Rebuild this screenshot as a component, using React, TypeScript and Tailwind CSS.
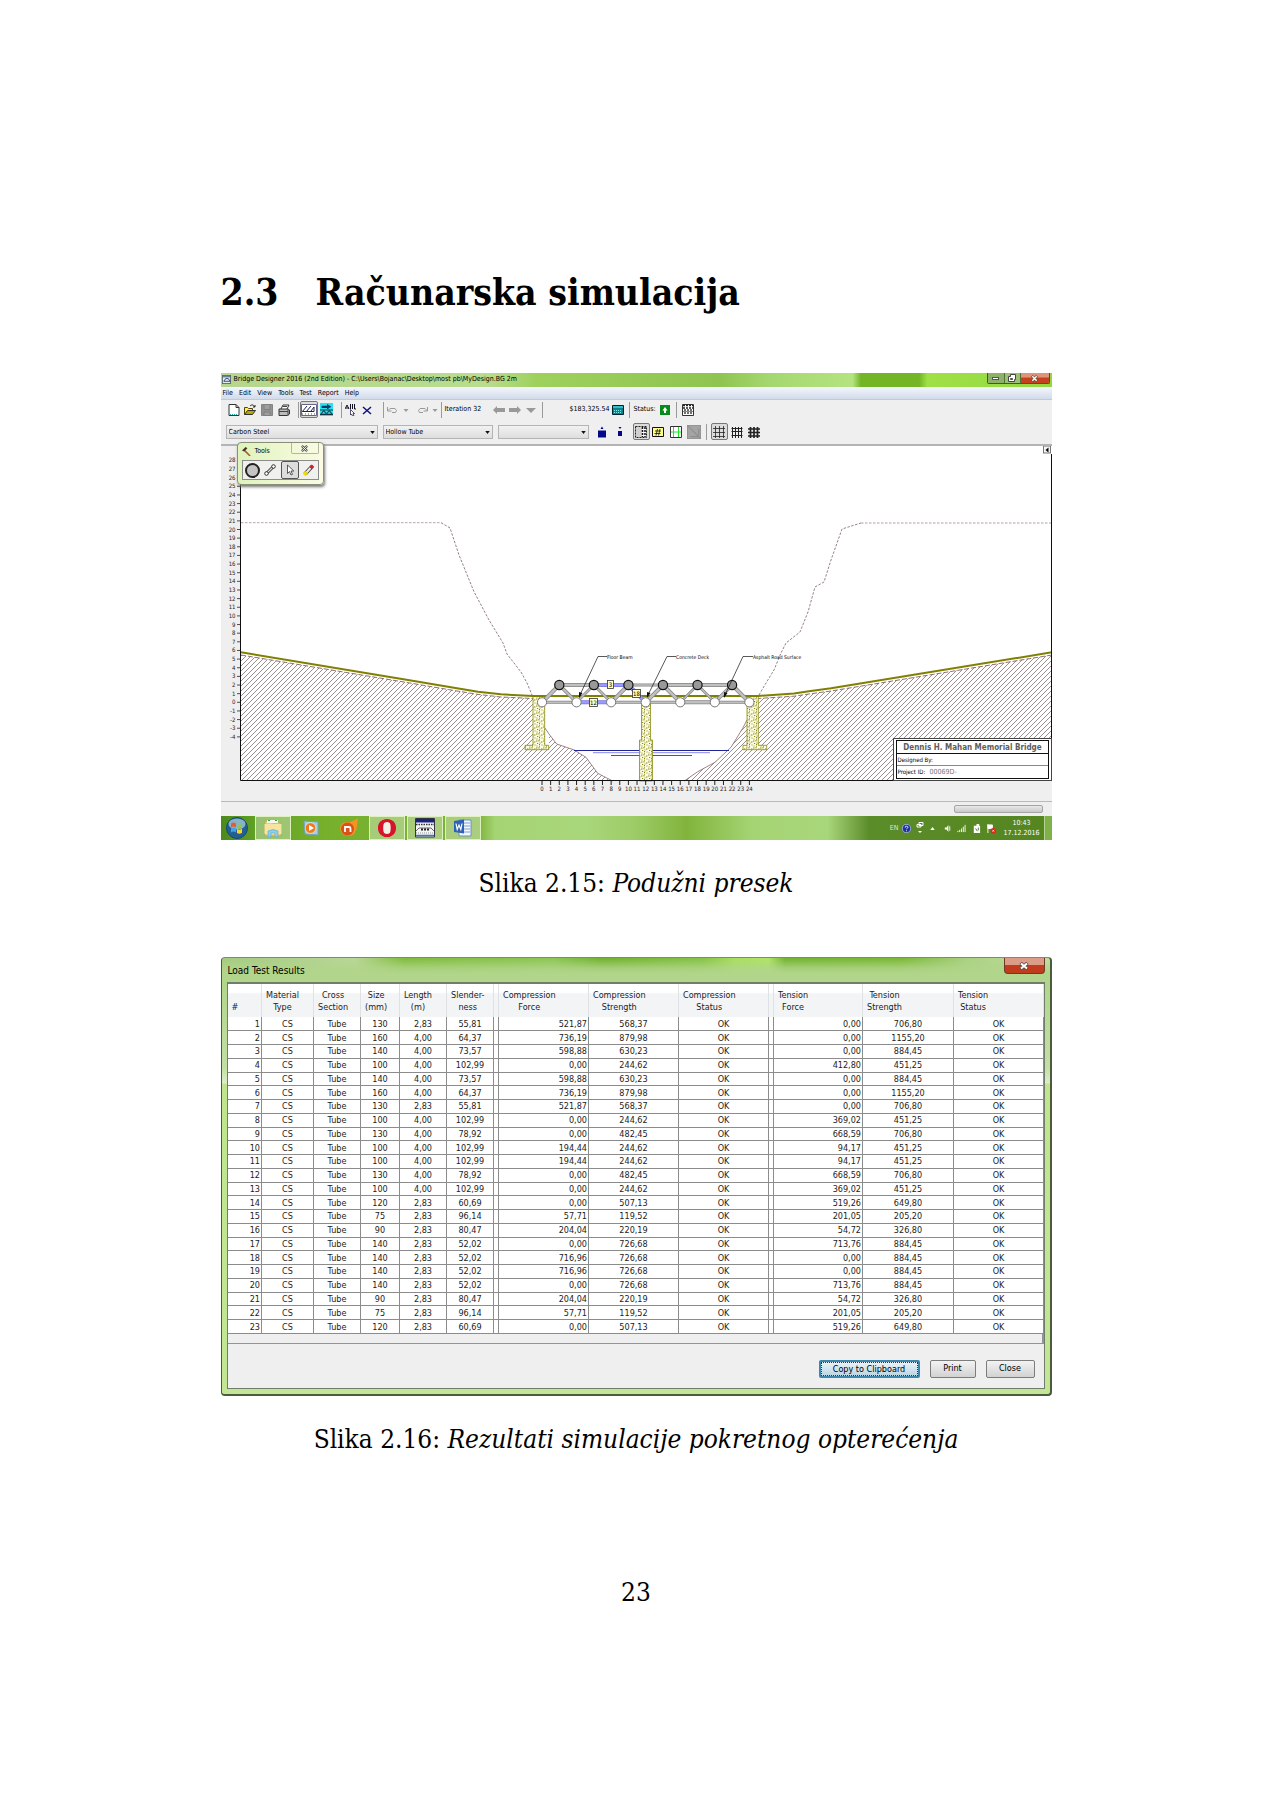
import React from "react";

const ui = "font-['DejaVu_Sans_Condensed','DejaVu_Sans',sans-serif]";
const serif = "font-['DejaVu_Serif_Condensed','DejaVu_Serif',serif]";

type Kids = { children?: React.ReactNode };

function Glyph({ children, wide = false }: Kids & { wide?: boolean }) {
  return (
    <svg viewBox={wide ? "0 0 16 12" : "0 0 12 12"} className={wide ? "h-3 w-4" : "size-3"} aria-hidden="true">
      {children}
    </svg>
  );
}

function Tool({ label, on = false, className, children }: Kids & { label: string; on?: boolean; className: string }) {
  return (
    <button
      type="button"
      aria-label={label}
      className={`flex h-[17px] shrink-0 items-center justify-center ${on ? "rounded-xs border border-[#777] bg-[#dcdcdc]" : ""} ${className}`}
    >
      {children}
    </button>
  );
}

function Sep({ className }: { className: string }) {
  return <span className={`h-4 w-px shrink-0 bg-[#9a9a9a] ${className}`} />;
}

function Caret() {
  return (
    <Glyph>
      <path d="M3.500 5h5L6 8z" fill="#999" />
    </Glyph>
  );
}

function Combo({ label, value, className }: { label: string; value: string; className: string }) {
  return (
    <span className={`relative flex ${className}`}>
      <select
        aria-label={label}
        className="h-[14px] w-full appearance-none border border-[#b4b4b4] bg-linear-to-b from-[#f2f2f2] to-[#dedede] pl-[2px] text-[7px] leading-3"
      >
        <option>{value}</option>
      </select>
      <svg viewBox="0 0 6 4" className="pointer-events-none absolute right-[3px] top-[6px] h-[3px] w-[5px]" aria-hidden="true">
        <path d="M0 0h6L3 4z" fill="#111" />
      </svg>
    </span>
  );
}

function TitleBar() {
  return (
    <div className="flex h-[14px] items-start bg-[linear-gradient(90deg,#b5d68c_0%,#b9dc8e_32%,#9ed05c_38%,#8fc450_60%,#a5d770_66%,#b4e37f_76%,#74b526_77%,#74b526_84%,#a0e046_85%,#93d843_100%)]">
      <svg viewBox="0 0 10 10" className="ml-px mt-[2px] size-[9px]" aria-hidden="true">
        <rect x="0.500" y="0.500" width="9" height="9" fill="#e8edf2" stroke="#567" />
        <path d="M1 2h8M2 7l2-3h3l2 3z" stroke="#246" fill="none" />
      </svg>
      <span className="ml-[3px] mt-[2px] whitespace-nowrap text-[7px] leading-[9px]">
        Bridge Designer 2016 (2nd Edition) - C:\Users\Bojanac\Desktop\most pb\MyDesign.BG 2m
      </span>
      <span className="ml-auto mr-[2px] flex h-[11px] overflow-hidden rounded-b-xs border border-t-0 border-[#3f5a28]">
        <button type="button" aria-label="Minimize" className="flex w-[17px] items-end justify-center border-r border-[#4f6f35] bg-[#8db168] pb-[3px]">
          <span className="h-[3px] w-[7px] border border-[#555] bg-white" />
        </button>
        <button type="button" aria-label="Restore" className="flex w-[16px] items-center justify-center border-r border-[#4f6f35] bg-[#9cbf77]">
          <svg viewBox="0 0 8 8" className="size-2" aria-hidden="true">
            <path d="M2.500.5h5v5h-1v2h-6v-5h2z" fill="#fff" stroke="#444" />
            <path d="M2.500 4.500h2v1h-2z" fill="#555" stroke="#555" />
          </svg>
        </button>
        <button type="button" aria-label="Close" className="flex w-[28px] items-center justify-center bg-linear-to-b from-[#e0927a] from-40% to-[#c5401c] to-50%">
          <svg viewBox="0 0 8 8" className="size-[7px]" aria-hidden="true">
            <path d="M1 1l6 6M7 1L1 7" stroke="#555" strokeWidth="3" />
            <path d="M1.500 1.500l5 5M6.500 1.500l-5 5" stroke="#fff" strokeWidth="1.600" />
          </svg>
        </button>
      </span>
    </div>
  );
}

function MainToolbar() {
  return (
    <div className="flex h-[19px] items-center pl-[5px]">
      <Tool label="New" className="w-4">
        <Glyph>
          <path d="M1 .5h7l3 3v8H1z" fill="#fff" stroke="#333" />
          <path d="M8 .5v3h3" fill="none" stroke="#333" />
          <path d="M2 10.500h8" stroke="#2aa" strokeDasharray="1 1" />
        </Glyph>
      </Tool>
      <Tool label="Open" className="w-4">
        <Glyph>
          <path d="M0.500 10.500v-7h3l1 1h4v2" fill="#ffee50" stroke="#554400" />
          <path d="M0.500 10.500l3-4h8l-3 4z" fill="#b5a800" stroke="#333" />
          <path d="M6 2c2-2 4-1 4.500 1M9 3h2V1" fill="none" stroke="#222" />
        </Glyph>
      </Tool>
      <Tool label="Save" className="w-[18px]">
        <Glyph>
          <path d="M0.500.5h11v11H.5z" fill="#929292" stroke="#848484" />
          <path d="M3 .5h6v5H3zM3 8h6v3.500H3z" fill="#9e9e9e" stroke="#808080" />
        </Glyph>
      </Tool>
      <Tool label="Print" className="w-[17px]">
        <Glyph>
          <path d="M3 5l2-4h6L9 5" fill="#fff" stroke="#333" />
          <path d="M1 5h9l1.500 1v4l-2 1.500H1z" fill="#bbb" stroke="#333" />
          <path d="M1 7.500h9M10 5.500v6M5 2.500h4" stroke="#444" />
        </Glyph>
      </Tool>
      <Sep className="mr-px ml-[5px]" />
      <Tool label="Drawing board" on className="w-[18px]">
        <Glyph wide>
          <path d="M.5.5h15v11H.5z" fill="#fff" stroke="#668" />
          <path d="M1 8l5-6M5 8l5-6M2 7.500h11V3l-3 4" fill="none" stroke="#225" />
          <path d="M1 10h14" stroke="#556" strokeDasharray="1 2" />
        </Glyph>
      </Tool>
      <Tool label="Load test" className="w-[18px]">
        <svg viewBox="0 0 12 12" className="size-[13px]" aria-hidden="true">
          <path d="M0 0h12v12H0z" fill="#2de0ec" />
          <path d="M1.500 2.500h5V1l4 2.500-4 2.500V4.500h-5z" fill="#003a70" />
          <path d="M0 6.500h12M0 10.500h12" stroke="#134" />
          <path d="M1 10l2.500-3L6 10l2.500-3 2.500 3" fill="none" stroke="#245" />
        </svg>
      </Tool>
      <Sep className="mr-px ml-[5px]" />
      <Tool label="Select all" className="w-[17px]">
        <Glyph>
          <path d="M0 5l2-4 2 4M1 4h3M5.500 0v5M7.500 0v5M9.500 0v5H11" stroke="#112" fill="none" />
          <path d="M5.500 5.500l4 4H8l1 2-1.500.5-1-2-1 1z" fill="#fff" stroke="#113" strokeWidth="0.700" />
        </Glyph>
      </Tool>
      <Tool label="Delete" className="w-[14px]">
        <Glyph>
          <path d="M2 3l8 7M10 3L2 10" stroke="#11117e" strokeWidth="1.500" />
        </Glyph>
      </Tool>
      <Sep className="ml-[9px] mr-[2px]" />
      <Tool label="Undo" className="w-3">
        <Glyph>
          <path d="M1.500 3v4h4M2 6.500l2-2h5l1.500 2-1 2H6" fill="none" stroke="#999" />
        </Glyph>
      </Tool>
      <Tool label="Undo list" className="ml-[2px] w-3">
        <Caret />
      </Tool>
      <Tool label="Redo" className="ml-[5px] w-3">
        <Glyph>
          <path d="M10.500 3v4h-4M10 6.500l-2-2H3l-1.500 2 1 2H6" fill="none" stroke="#999" />
        </Glyph>
      </Tool>
      <Tool label="Redo list" className="w-3">
        <Caret />
      </Tool>
      <Sep className="mr-[3px]" />
      <span className="w-[46px] whitespace-nowrap text-[7px]">Iteration 32</span>
      <Tool label="Back" className="w-4">
        <Glyph>
          <path d="M0 6l4-4v2h8v4H4v2z" fill="#999" />
        </Glyph>
      </Tool>
      <Tool label="Forward" className="w-4">
        <Glyph>
          <path d="M12 6L8 2v2H0v4h8v2z" fill="#999" />
        </Glyph>
      </Tool>
      <Tool label="Iterations" className="w-4">
        <Glyph>
          <path d="M1 4h10L6 9z" fill="#999" />
        </Glyph>
      </Tool>
      <Sep className="mr-[27px] ml-[3px]" />
      <span className="w-[40px] whitespace-nowrap text-[7px]">$183,325.54</span>
      <Tool label="Cost report" className="w-4">
        <Glyph>
          <path d="M.5 1.500h11v9H.5z" fill="#157f8c" stroke="#023" />
          <path d="M1 3h10" stroke="#5ff" />
          <path d="M2 8.500h8M2 6.500h8" stroke="#7ee" strokeDasharray="1 1" />
        </Glyph>
      </Tool>
      <Sep className="ml-[3px] mr-[4px]" />
      <span className="w-[24px] whitespace-nowrap text-[7px]">Status:</span>
      <Tool label="Bridge status" className="w-[14px]">
        <Glyph>
          <path d="M1 1h10v10H1z" fill="#078a1c" />
          <path d="M6 3L3.500 6.500H5V9h2V6.500h1.500z" fill="#fff" />
        </Glyph>
      </Tool>
      <Sep className="mx-[4px]" />
      <Tool label="Load test report" className="w-[14px]">
        <Glyph>
          <path d="M.5.500h11v11H.5z" fill="#fff" stroke="#333" />
          <path d="M1 1.500h10M1 4h10" stroke="#222" strokeWidth="1.400" strokeDasharray="2 1" />
          <path d="M3 5v6M6 5v6M9 5v6" stroke="#222" strokeWidth="1.300" strokeDasharray="2 1" />
          <path d="M1 7.500h10" stroke="#888" />
        </Glyph>
      </Tool>
    </div>
  );
}

function GridGlyph({ d, w }: { d: string; w: number }) {
  return (
    <Glyph>
      <path d={d} stroke="#222" strokeWidth={w} fill="none" />
    </Glyph>
  );
}

function MemberToolbar() {
  return (
    <div className="flex h-[27px] items-center border-b-2 border-[#b4b4b4] pl-[5px]">
      <Combo label="Material" value="Carbon Steel" className="w-[152px]" />
      <Combo label="Cross section" value="Hollow Tube" className="ml-[5px] w-[110px]" />
      <Combo label="Size" value="" className="ml-[5px] w-[91px]" />
      <Tool label="Increase size" className="ml-[5px] w-[17px]">
        <Glyph>
          <path d="M2 4.500h8v7H2zM4.500 3h3L6 .5z" fill="#06068a" />
        </Glyph>
      </Tool>
      <Tool label="Decrease size" className="w-[18px]">
        <Glyph>
          <path d="M4 5h4v5H4zM4.500 1h3L6 3z" fill="#06068a" />
        </Glyph>
      </Tool>
      <Tool label="Member table" on className="ml-[4px] w-[17px]">
        <Glyph>
          <path d="M.5.500h11v11H.5z" fill="#d0d0d0" stroke="#222" strokeDasharray="2 1" />
          <path d="M7 1h4v10H7z" fill="#fff" />
          <path d="M7.500 1v10M10 1v10" stroke="#111" strokeDasharray="2 1" strokeWidth="1.500" />
        </Glyph>
      </Tool>
      <Tool label="Member numbers" className="w-[17px]">
        <Glyph>
          <path d="M.5 1.500h11v9H.5z" fill="#ffff88" stroke="#111" />
          <path d="M3 5h6M2.500 7.500h6M5.500 3L4 9.500M8 3L6.500 9.500" stroke="#111" strokeWidth="0.800" />
        </Glyph>
      </Tool>
      <Tool label="Guides" className="w-[19px]">
        <Glyph>
          <path d="M.5.500h11v11H.5z" fill="#fff" stroke="#333" />
          <path d="M3.500 1v10M8.500 1v10M1 6h10" stroke="#1de52d" />
        </Glyph>
      </Tool>
      <Tool label="Template" className="w-[16px]">
        <svg viewBox="0 0 12 12" className="size-[14px]" aria-hidden="true">
          <path d="M0 0h12v12H0z" fill="#a4a4a4" stroke="#888" />
          <path d="M1 1l10 10M3 10h7V3" stroke="#8e8e8e" fill="none" />
        </svg>
      </Tool>
      <Sep className="mr-[4px] ml-[4px]" />
      <Tool label="Coarse grid" on className="w-[17px]">
        <GridGlyph w={0.8} d="M2.500 0v12M6.500 0v12M10.500 0v12M0 2.500h12M0 6.500h12M0 10.500h12" />
      </Tool>
      <Tool label="Medium grid" className="w-[18px]">
        <GridGlyph w={1} d="M1.500 1v11M4.500 1v11M7.500 1v11M10.500 1v11M.5 2.500h11M.5 5.500h11M.5 9.500h11" />
      </Tool>
      <Tool label="Fine grid" className="w-[17px]">
        <GridGlyph w={1.7} d="M2.500 1v11M6 1v11M9.500 1v11M0 3h12M0 6.500h12M0 10h12" />
      </Tool>
    </div>
  );
}

function ToolsPalette() {
  return (
    <div className="absolute left-[16px] top-[69px] w-[87px] rounded-sm border border-[#8a8f78] bg-linear-to-r from-[#dff3bb] to-[#fbfbe4] px-[4px] pb-[4px] shadow-[1px_2px_3px_#777]">
      <div className="flex h-[17px] items-start">
        <svg viewBox="0 0 10 10" className="mt-[4px] size-[9px]" aria-hidden="true">
          <path d="M3 4l6 6" stroke="#a5622d" strokeWidth="1.800" />
          <path d="M0 4l4-4 2 1.500L2.500 5z" fill="#443322" />
        </svg>
        <span className="ml-[4px] mt-[4px] text-[7px] leading-[9px]">Tools</span>
        <button type="button" aria-label="Close tools" className="ml-auto flex h-[11px] w-[28px] items-center justify-center rounded-b-xs border border-t-0 border-[#b3b69c]">
          <svg viewBox="0 0 8 8" className="size-[7px]" aria-hidden="true">
            <path d="M1 1l6 6M7 1L1 7" stroke="#555" strokeWidth="2.600" />
            <path d="M1.500 1.500l5 5M6.500 1.500l-5 5" stroke="#fff" />
          </svg>
        </button>
      </div>
      <div className="flex h-[20px] items-center justify-around border border-[#8b8b8b] bg-[#f0f0ee]">
        <button type="button" aria-label="Joint" className="size-[15px] rounded-full border-2 border-[#222] bg-[#c4c4c4]" />
        <button type="button" aria-label="Member">
          <Glyph>
            <path d="M2.500 9.500l7-7" stroke="#333" strokeWidth="3" />
            <path d="M2.500 9.500l7-7" stroke="#ddd" strokeWidth="1.300" />
            <circle cx="2.500" cy="9.500" r="1.800" fill="#fff" stroke="#333" />
            <circle cx="9.500" cy="2.500" r="1.800" fill="#fff" stroke="#333" />
          </Glyph>
        </button>
        <button type="button" aria-label="Select" className="flex h-[18px] w-[18px] items-center justify-center rounded-xs border border-[#555] bg-[#ddd]">
          <Glyph>
            <path d="M3.500 1v8.500l2-2L7 11l1.500-.7L7 7h2.800z" fill="#fff" stroke="#333" strokeWidth="0.800" />
          </Glyph>
        </button>
        <button type="button" aria-label="Erase">
          <Glyph>
            <path d="M2 10l7.500-8" stroke="#444" strokeWidth="4" />
            <path d="M3.500 8.500l4-4.500" stroke="#eee" strokeWidth="2" />
            <path d="M1 11l2.500-2.700" stroke="#f0e000" strokeWidth="3.600" />
            <path d="M8 3.600l2-2.200" stroke="#d22" strokeWidth="3" />
          </Glyph>
        </button>
      </div>
    </div>
  );
}

const U = 8.64;
const X0 = 321;
const Y0 = 256.3;
const px = (m: number) => X0 + m * U;
const py = (m: number) => Y0 - m * U;

type Member = [number, number, number, number, number, boolean?];
const members: Member[] = [
  [2, 2, 6, 2, 4], [6, 2, 10, 2, 4, true], [10, 2, 14, 2, 3], [14, 2, 18, 2, 4], [18, 2, 22, 2, 4],
  [0, 0, 4, 0, 3], [4, 0, 8, 0, 4, true], [8, 0, 12, 0, 3], [12, 0, 16, 0, 3], [16, 0, 20, 0, 4], [20, 0, 24, 0, 3],
  [0, 0, 2, 2, 4], [2, 2, 4, 0, 3.4], [4, 0, 6, 2, 2.8], [6, 2, 8, 0, 3], [8, 0, 10, 2, 4], [10, 2, 12, 0, 4, true],
  [12, 0, 14, 2, 4], [14, 2, 16, 0, 4], [16, 0, 18, 2, 2.6], [18, 2, 20, 0, 2.8], [20, 0, 22, 2, 3.6], [22, 2, 24, 0, 4],
];

const tags: [number, number, string][] = [
  [389.5, 238.5, "3"],
  [372.5, 256.5, "12"],
  [415.5, 247.5, "18"],
];

const leaders: [number, number, number, string][] = [
  [358, 377, 386, "Floor Beam"],
  [426, 446, 455, "Concrete Deck"],
  [503, 522, 532, "Asphalt Road Surface"],
];

const leftGround = "M20 206.300L187 234 230 241.300 257 245.700 280 248.300 312 250";
const rightGround = "M537 250L573 247.500 588 245.300 610 242.300 831 206.300";
const leftSoil =
  "M20 209L187 236.700 230 244 257 248.400 280 251 312 252.500V299H328V288L335.700 298 353.300 304 365 311.300 376.700 327.300 391.700 335H20z";
const rightSoil =
  "M831 209L610 245 588 248 573 250.200 537 252.500V299H526V274L521.700 282.300 510 301.300 494 316.300 476.700 325.700 463.300 335H831z";

function BridgeDrawing() {
  const levels = Array.from({ length: 33 }, (_, i) => i - 4);
  const stations = Array.from({ length: 25 }, (_, i) => i);
  return (
    <svg viewBox="0 0 831 355" className={`block h-auto w-full ${ui}`} role="img" aria-label="Bridge elevation">
      <defs>
        <pattern id="hatch" width="5" height="5" patternUnits="userSpaceOnUse">
          <path d="M-1 6L6-1M-1 1L1-1M4 6L6 4" stroke="#7a6868" strokeWidth="0.750" />
        </pattern>
        <pattern id="concrete" width="7" height="7" patternUnits="userSpaceOnUse">
          <rect width="7" height="7" fill="#fdfde6" />
          <path d="M0 1h1.500M3 0v1.500M5 2h1.500M1 3.500h1.200M3.500 4v1M5.500 5h1M.5 6h1M3 6.200h1M4 2.500v1" stroke="#8a8a10" strokeWidth="1" />
        </pattern>
      </defs>
      <rect width="831" height="355" fill="#efefef" />
      <rect x="20" width="811" height="335" fill="#fff" />
      <g fill="none" stroke="#7d5f5f" strokeWidth="0.800" strokeDasharray="2.500 1.500">
        <path d="M20 76.700H220" stroke="#a08c8c" />
        <path d="M640 77H830" stroke="#a08c8c" />
        <path d="M220 76.700L229 82 233 94 238 109 253 145.700 268 174 282 197 286 208 300 226 306 237 311 249" />
        <path d="M538 249L545 237 553 224 560 207 565 197 579 186 587 166 594 141 603 136 610 114 621 83 640 77" />
      </g>
      <path d={leftSoil} fill="url(#hatch)" />
      <path d={rightSoil} fill="url(#hatch)" />
      <path d="M328 288L335.700 298 353.300 304 365 311.300 376.700 327.300 391.700 335M526 274L521.700 282.300 510 301.300 494 316.300 476.700 325.700 463.300 335" fill="none" stroke="#8a6464" strokeWidth="0.800" />
      <path d="M324 282l4 6" stroke="#8a6464" strokeWidth="0.800" />
      <path d="M20 209L187 236.700 230 244 257 248.400 280 251 312 252.500M831 209L610 245 588 248 573 250.200 537 252.500" fill="none" stroke="#7a4a4a" strokeWidth="0.800" strokeDasharray="5 2" />
      <path d={leftGround} fill="none" stroke="#808000" strokeWidth="2" />
      <path d={rightGround} fill="none" stroke="#808000" strokeWidth="2" />
      <path d="M353 304.500H508" stroke="#22229a" />
      <path d="M372 306.700H489" stroke="#8888dd" />
      <path d="M390 309.500H471" stroke="#4a4ab8" />
      <g fill="url(#concrete)" stroke="#8a8a10" strokeWidth="0.800">
        <path d="M312 250H323.700V299.300H327.700V303.700H304V299.300H312z" />
        <path d="M526 250H537.300V299.300H545.700V303.700H522V299.300H526z" />
        <path d="M420.500 258H429.500V294H431.500V335H418.500V294H420.500z" />
      </g>
      <path d="M311 250H538" stroke="#808000" strokeWidth="2" />
      {members.map(([a, b, c, d, w, hot], i) => (
        <g key={i}>
          <line x1={px(a)} y1={py(b)} x2={px(c)} y2={py(d)} stroke={hot ? "#7676dc" : "#858585"} strokeWidth={w} />
          <line x1={px(a)} y1={py(b)} x2={px(c)} y2={py(d)} stroke={hot ? "#9b9bff" : "#c0c0c0"} strokeWidth={w - 1.5} />
        </g>
      ))}
      {[0, 4, 8, 12, 16, 20, 24].map((m) => (
        <circle key={m} cx={px(m)} cy={py(0)} r="4.600" fill="#fff" stroke="#777" />
      ))}
      {[2, 6, 10, 14, 18, 22].map((m) => (
        <circle key={m} cx={px(m)} cy={py(2)} r="4.600" fill="#999" stroke="#111" strokeWidth="1.200" />
      ))}
      {tags.map(([x, y, t]) => (
        <g key={t}>
          <rect x={x - (t.length > 1 ? 4 : 3)} y={y - 4} width={t.length > 1 ? 8 : 6} height="8" fill="#ffffbe" stroke="#333" strokeWidth="0.800" />
          <text x={x} y={y + 2} textAnchor="middle" fontSize="6">{t}</text>
        </g>
      ))}
      {leaders.map(([x1, x2, x3, t]) => (
        <g key={t}>
          <path d={`M${x1} 251L${x2} 210.500H${x3}`} fill="none" stroke="#111" strokeWidth="0.700" />
          <path d={`M${x1} 252v-6l3.500 1z`} fill="#111" />
          <text x={x3} y="212.500" fontSize="5">{t}</text>
        </g>
      ))}
      {levels.map((v) => (
        <g key={v}>
          <path d={`M16 ${py(v)}H20`} stroke="#222" strokeWidth="0.800" />
          <text x="14.500" y={py(v) + 2} textAnchor="end" fontSize="6" fill="#222">{v}</text>
        </g>
      ))}
      {stations.map((v) => (
        <g key={v}>
          <path d={`M${px(v)} 335V339`} stroke="#222" />
          <text x={px(v)} y="345" textAnchor="middle" fontSize="6" fill="#222">{v}</text>
        </g>
      ))}
      <path d="M19.500 8V334.500H831M830.500 8V335" fill="none" stroke="#111" />
      <rect x="672.500" y="292.500" width="158" height="42" fill="#fff" stroke="#444" />
      <rect x="675.500" y="294.500" width="152" height="38" fill="#fff" stroke="#111" />
      <path d="M676 307.500H827" stroke="#111" />
      <path d="M676 319.500H827" stroke="#888" />
      <text x="751.500" y="304" textAnchor="middle" fontSize="8" fontWeight="700" fill="#5c5c5c">Dennis H. Mahan Memorial Bridge</text>
      <text x="676.500" y="315.500" fontSize="6">Designed By:</text>
      <text x="676.500" y="328" fontSize="6">Project ID:</text>
      <text x="708.500" y="328" fontSize="7" fill="#777">00069D-</text>
      <rect x="822.500" y="0" width="7" height="7" fill="#f4f4f4" stroke="#777" />
      <path d="M827.500 1.500v5l-3-2.500z" fill="#000" />
    </svg>
  );
}

function TaskButton({ label, boxed = false, children }: Kids & { label: string; boxed?: boolean }) {
  return (
    <button
      type="button"
      aria-label={label}
      className={`flex h-6 w-[36px] items-center justify-center ${boxed ? "border border-[#dff0c0] bg-white/35" : ""}`}
    >
      <svg viewBox="0 0 20 20" className="size-5" aria-hidden="true">{children}</svg>
    </button>
  );
}

function Taskbar() {
  return (
    <div className="flex h-6 items-center gap-[2px] bg-[linear-gradient(90deg,#4b8a1c_0%,#5f9f24_4%,#76b02b_12%,#7db33a_31%,#a5d474_33%,#a8d67a_44%,#9ccb66_50%,#81b43c_56%,#a5d474_64%,#a8d67a_73%,#5b8c2a_78%,#55851f_100%)]">
      <button type="button" aria-label="Start" className="flex w-[32px] items-center justify-center">
        <svg viewBox="0 0 22 22" className="size-[22px]" aria-hidden="true">
          <circle cx="11" cy="11" r="10.500" fill="#245f91" stroke="#184872" />
          <ellipse cx="11" cy="7" rx="8.500" ry="5.500" fill="#86b2cc" />
          <path d="M5 6.500q2.500-2 5 0v4q-2.500-1.800-5 0z" fill="#ef5a28" />
          <path d="M11 7q2.500 1.800 5-.3v4q-2.500 2-5 .3z" fill="#8ccc3a" />
          <path d="M5 11.500q2.500-1.800 5 0v4q-2.500-1.800-5 0z" fill="#3fa7e6" />
          <path d="M11 12q2.500 1.800 5-.3v4q-2.500 2-5 .3z" fill="#ffd02e" />
        </svg>
      </button>
      <TaskButton label="Explorer" boxed>
        <path d="M2 3h6l1.500 2H18v13H2z" fill="#e8cf7c" stroke="#b99b45" strokeWidth="0.600" />
        <path d="M4 2h11v3H4z" fill="#f7f7f0" />
        <path d="M5 2.500h2M12 2.500h2" stroke="#3a3" />
        <path d="M1.500 6h17v10h-17z" fill="#f5e5a0" />
        <path d="M5 19v-6q5-3 10 0v6h-3v-4H8v4z" fill="#8fcde9" stroke="#5aa7cf" strokeWidth="0.600" />
      </TaskButton>
      <TaskButton label="Media Player">
        <path d="M3 3l14 1v13L4 16z" fill="#a9d0e2" stroke="#6fa3bf" />
        <circle cx="9.500" cy="10" r="5.300" fill="#ee7a1d" stroke="#fff" strokeWidth="0.500" />
        <path d="M8 7l5 3-5 3z" fill="#fff" />
      </TaskButton>
      <TaskButton label="Nero">
        <path d="M8 4l4 0 7-4-1 8q-1 10-9 10-8-1-8-8 1-6 7-6z" fill="#f59220" />
        <circle cx="8.500" cy="11" r="6.500" fill="#d8531a" />
        <path d="M6 14V9h4q1.500 0 1.500 1.500V14" fill="none" stroke="#fff" strokeWidth="1.800" />
      </TaskButton>
      <TaskButton label="Opera" boxed>
        <ellipse cx="10" cy="10" rx="7" ry="7.500" fill="#eef3e6" stroke="#d8142a" strokeWidth="3.200" />
        <path d="M10 1.500C5 3 5 17 10 18.500 4 19 1 15 1 10s3-9 9-8.500zM10 1.500c5 1.500 5 15.500 0 17 6 .5 9-3.500 9-8.500s-3-9-9-8.500z" fill="#d8142a" />
      </TaskButton>
      <TaskButton label="Bridge Designer" boxed>
        <path d="M.5.500h19v18.500H.5z" fill="#f4f4f4" stroke="#334" />
        <path d="M1 1h18v3.500H1z" fill="#1a237e" />
        <path d="M1 6.500h18" stroke="#333" strokeWidth="1.500" strokeDasharray="1.500 1" />
        <path d="M1 13l3-3h12l3 3" fill="none" stroke="#666" />
        <path d="M6 11.500h8" stroke="#222" strokeWidth="2" strokeDasharray="2 1" />
        <path d="M1 15h18" stroke="#999" strokeDasharray="1 1" />
        <path d="M1 17.500h18" stroke="#3a7ac0" strokeWidth="1.500" />
      </TaskButton>
      <TaskButton label="Word" boxed>
        <path d="M6 2h12v16H6z" fill="#f4f8fd" stroke="#6f8fbf" />
        <path d="M11 5h6M11 8h6M11 11h6M8 14h9" stroke="#7f9fcf" />
        <path d="M1 3l10-1.500v14L1 14z" fill="#2f62b5" />
        <path d="M3 5.500l1.200 6L6 7l1.800 4.500L9 5.500" fill="none" stroke="#fff" strokeWidth="1.200" />
      </TaskButton>
      <div className="ml-auto flex items-center text-white">
        <span className="text-[7px] text-[#dde8cc]">EN</span>
        <svg viewBox="0 0 10 10" className="ml-[4px] size-[9px]" aria-hidden="true">
          <circle cx="5" cy="5" r="4.500" fill="#1c2fa8" stroke="#b8c4ff" strokeWidth="0.800" />
          <path d="M3.500 4q0-1.500 1.500-1.500T6.500 4Q6 5 5 5.500M5 7v1" stroke="#fff" fill="none" />
        </svg>
        <svg viewBox="0 0 8 14" className="ml-[5px] h-[14px] w-2" aria-hidden="true">
          <path d="M3 1.500h4v3H3zM1 3.500h4v2.500H1z" fill="none" stroke="#fff" />
          <path d="M2 10h4l-2 2z" fill="#fff" />
        </svg>
        <svg viewBox="0 0 6 4" className="ml-[6px] h-[3px] w-[5px]" aria-hidden="true">
          <path d="M0 4h6L3 0z" fill="#fff" />
        </svg>
        <svg viewBox="0 0 10 10" className="ml-[8px] size-[9px]" aria-hidden="true">
          <path d="M2 4h2l2-3v8L4 6H2z" fill="#fff" />
          <path d="M7.500 2.500v5" stroke="#fff" />
        </svg>
        <svg viewBox="0 0 10 10" className="ml-[5px] size-[9px]" aria-hidden="true">
          <path d="M1 9V7.500M3 9V6.500M5 9V5M7 9V3M9 9V1" stroke="#fff" />
        </svg>
        <svg viewBox="0 0 10 12" className="ml-[6px] h-[11px] w-[9px]" aria-hidden="true">
          <path d="M2 3h3V1h3v2h1v8H2z" fill="#fff" />
          <path d="M4 6l2 3M7 5v3" stroke="#4a6a2a" />
        </svg>
        <svg viewBox="0 0 10 12" className="ml-[6px] h-[11px] w-[9px]" aria-hidden="true">
          <path d="M1 1v10M1 2h5v4H1z" fill="#fff" stroke="#fff" />
          <circle cx="7" cy="8.500" r="3" fill="#d82a20" />
          <path d="M6 7.500l2 2M8 7.500l-2 2" stroke="#fff" strokeWidth="0.800" />
        </svg>
        <span className="ml-[7px] flex flex-col items-center text-[7px] leading-[10px]">
          <span>10:43</span>
          <span>17.12.2016</span>
        </span>
        <span className="ml-[4px] h-6 w-[8px] border-l border-[#b5d494] bg-[#7fb04a]" />
      </div>
    </div>
  );
}

function DesignerWindow() {
  return (
    <div className={`relative w-full overflow-hidden bg-[#efefef] text-black ${ui}`}>
      <TitleBar />
      <nav className="flex h-[13px] items-center gap-[6px] border-b border-[#c5c9d2] bg-linear-to-b from-[#f4f7fc] to-[#d2dbeb] pl-[2px] text-[7px] leading-none">
        {["File", "Edit", "View", "Tools", "Test", "Report", "Help"].map((m) => (
          <button key={m} type="button">{m}</button>
        ))}
      </nav>
      <MainToolbar />
      <MemberToolbar />
      <BridgeDrawing />
      <div className="flex h-[15px] items-center justify-end border-t border-[#b9b9b9] pr-[9px]">
        <div className="h-2 w-[89px] rounded-xs border border-[#a5a5a5] bg-linear-to-b from-[#e8e8e8] to-[#c9c9c9]" />
      </div>
      <Taskbar />
      <ToolsPalette />
    </div>
  );
}

const columns: [string, string, string][] = [
  ["#", "", "w-[34px]"],
  ["Material", "Type", "w-[52px]"],
  ["Cross", "Section", "w-[47px]"],
  ["Size", "(mm)", "w-[39px]"],
  ["Length", "(m)", "w-[47px]"],
  ["Slender-", "ness", "w-[47px]"],
  ["", "", "w-[5px]"],
  ["Compression", "Force", "w-[90px]"],
  ["Compression", "Strength", "w-[90px]"],
  ["Compression", "Status", "w-[90px]"],
  ["", "", "w-[5px]"],
  ["Tension", "Force", "w-[89px]"],
  ["Tension", "Strength", "w-[91px]"],
  ["Tension", "Status", "w-[90px]"],
];

const results = `130 2,83 55,81 521,87 568,37 0,00 706,80
160 4,00 64,37 736,19 879,98 0,00 1155,20
140 4,00 73,57 598,88 630,23 0,00 884,45
100 4,00 102,99 0,00 244,62 412,80 451,25
140 4,00 73,57 598,88 630,23 0,00 884,45
160 4,00 64,37 736,19 879,98 0,00 1155,20
130 2,83 55,81 521,87 568,37 0,00 706,80
100 4,00 102,99 0,00 244,62 369,02 451,25
130 4,00 78,92 0,00 482,45 668,59 706,80
100 4,00 102,99 194,44 244,62 94,17 451,25
100 4,00 102,99 194,44 244,62 94,17 451,25
130 4,00 78,92 0,00 482,45 668,59 706,80
100 4,00 102,99 0,00 244,62 369,02 451,25
120 2,83 60,69 0,00 507,13 519,26 649,80
75 2,83 96,14 57,71 119,52 201,05 205,20
90 2,83 80,47 204,04 220,19 54,72 326,80
140 2,83 52,02 0,00 726,68 713,76 884,45
140 2,83 52,02 716,96 726,68 0,00 884,45
140 2,83 52,02 716,96 726,68 0,00 884,45
140 2,83 52,02 0,00 726,68 713,76 884,45
90 2,83 80,47 204,04 220,19 54,72 326,80
75 2,83 96,14 57,71 119,52 201,05 205,20
120 2,83 60,69 0,00 507,13 519,26 649,80`
  .split("\n")
  .map((line, i) => {
    const [size, len, slender, cf, cs, tf, ts] = line.split(" ");
    return [String(i + 1), "CS", "Tube", size, len, slender, "", cf, cs, "OK", "", tf, ts, "OK"];
  });

const rightAligned = new Set([0, 7, 11]);

function ResultsTable() {
  return (
    <table className="h-[350px] w-full table-fixed border-collapse bg-white text-[9px] leading-[12px] text-[#1c1c1c]">
      <colgroup>
        {columns.map(([, , w], i) => (
          <col key={i} className={w} />
        ))}
      </colgroup>
      <thead>
        <tr className="h-[33px] bg-linear-to-b from-white from-25% to-[#f2f4f6] to-30%">
          {columns.map(([a, b], i) => (
            <th key={i} scope="col" className={`border-r border-[#dfe2e5] p-0 text-left align-bottom font-normal whitespace-nowrap ${i === 6 || i === 10 ? "" : "pl-[4px]"}`}>
              <span className="mb-[4px] inline-block text-center align-bottom">
                {a}
                {b && <br />}
                {b}
              </span>
            </th>
          ))}
        </tr>
      </thead>
      <tbody>
        {results.map((row, r) => (
          <tr key={r} className="h-[13px]">
            {row.map((cell, c) => (
              <td key={c} className={`border-r border-b border-[#8c8c8c] p-0 ${rightAligned.has(c) ? "pr-px text-right" : "text-center"}`}>
                {cell}
              </td>
            ))}
          </tr>
        ))}
      </tbody>
    </table>
  );
}

function ResultsDialog() {
  const plain = "h-[18px] rounded-xs border border-[#7c7c7c] bg-linear-to-b from-[#f3f3f3] to-[#d2d2d2]";
  return (
    <div className={`w-full rounded-sm border border-t-[#7d8b70] border-r-2 border-b-2 border-[#4c5a3e] bg-[linear-gradient(180deg,#a4cc7c_0px,#b0d68a_24px,#c3dfa5_110px,#dcedc8_125px,#c0e58e_126px,#c2e695_100%)] ${ui}`}>
      <div className="flex h-6 items-start justify-between rounded-t-sm bg-[linear-gradient(180deg,transparent_0px,#b1d58acc_10px,#b1d58a_16px),linear-gradient(90deg,#a3c980_0%,#b9d79a_16%,#7fbb3a_22%,#8cc653_40%,#6fb02c_46%,#84c243_58%,#a9e05c_62%,#b0e565_66%,#6fb32c_68%,#79b733_82%,#a9d180_90%,#c4dfa8_100%)] pl-[6px]">
        <span className="mt-[6px] text-[10px] leading-[13px]">Load Test Results</span>
        <button type="button" aria-label="Close dialog" className="mr-[5px] flex h-4 w-[41px] items-center justify-center rounded-b-sm border border-t-0 border-[#6d3a2a] bg-linear-to-b from-[#dc9c88] from-45% to-[#c03c1c] to-50%">
          <svg viewBox="0 0 10 8" className="h-[8px] w-[10px]" aria-hidden="true">
            <path d="M1.500 1l7 6M8.500 1l-7 6" stroke="#555" strokeWidth="3.400" />
            <path d="M2 1.500l6 5M8 1.500l-6 5" stroke="#fff" strokeWidth="2" />
          </svg>
        </button>
      </div>
      <div className="mx-[5px] mb-[5px] border border-t-2 border-[#727c6c] bg-[#efefef]">
        <div className="border-r-2 border-b border-[#8f959b] pb-[9px]">
          <ResultsTable />
        </div>
        <div className="flex h-[44px] items-center justify-end gap-[10px] pt-[6px] pr-[9px] text-[9px]">
          <button type="button" className="h-[18px] w-[101px] rounded-xs border-2 border-[#3c87ad] bg-linear-to-b from-[#eaf4f9] to-[#b9d4e2] leading-none outline-1 -outline-offset-3 outline-dotted outline-[#333]">
            Copy to Clipboard
          </button>
          <button type="button" className={`w-[46px] ${plain}`}>Print</button>
          <button type="button" className={`w-[49px] ${plain}`}>Close</button>
        </div>
      </div>
    </div>
  );
}

export default function App() {
  return (
    <main className={`min-h-screen w-full bg-white text-black ${serif}`}>
      <article className="mx-auto w-full max-w-[831px] pt-[268px]">
        <h1 className="flex gap-[37px] text-[37px] leading-[48px] font-bold">
          <span>2.3</span>
          <span>Računarska simulacija</span>
        </h1>
        <figure className="mt-[57px]">
          <DesignerWindow />
          <figcaption className="mt-[26px] text-center text-[26px] leading-[34px]">
            Slika 2.15: <em>Podužni presek</em>
          </figcaption>
        </figure>
        <figure className="mt-[57px]">
          <ResultsDialog />
          <figcaption className="mt-[26px] text-center text-[26px] leading-[34px]">
            Slika 2.16: <em>Rezultati simulacije pokretnog opterećenja</em>
          </figcaption>
        </figure>
        <footer className="mt-[119px] text-center text-[26px] leading-[34px]">23</footer>
      </article>
    </main>
  );
}
